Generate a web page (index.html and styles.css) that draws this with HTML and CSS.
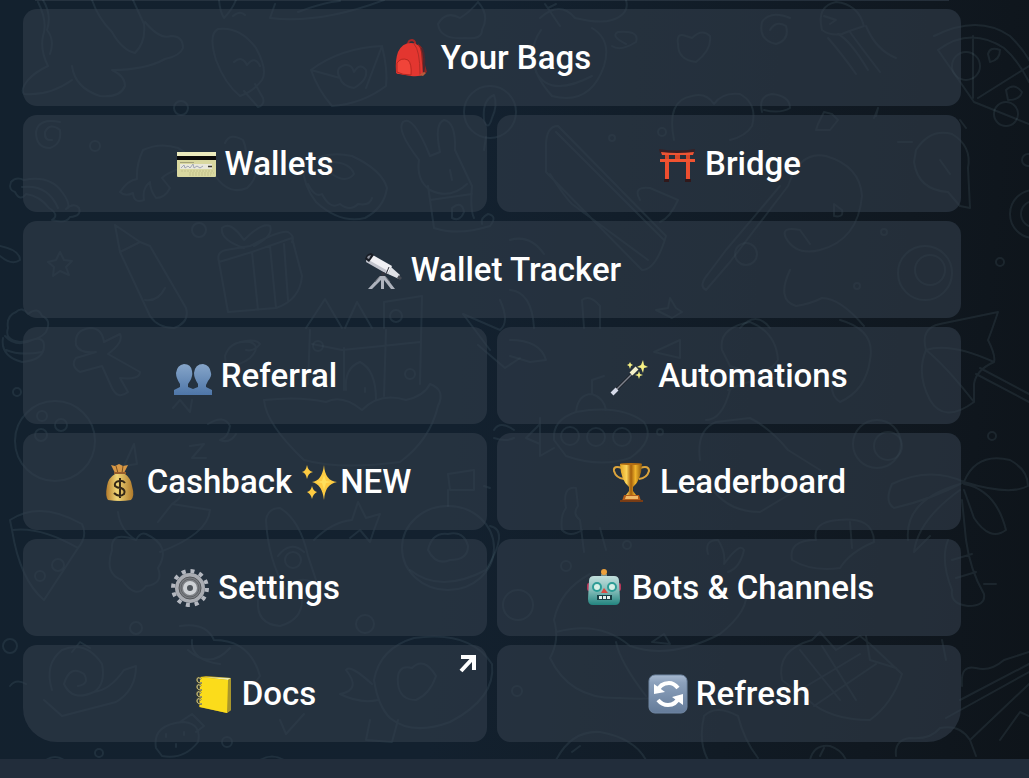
FILE: index.html
```html
<!DOCTYPE html>
<html lang="en">
<head>
    <meta charset="UTF-8">
    <meta name="viewport" content="width=device-width, initial-scale=1.0">
    <title>Bot Menu</title>
    <link rel="stylesheet" href="styles.css">
</head>
<body>
    <main class="chat">
        <!-- Wallpaper doodles, drawn behind the keyboard -->
        <svg class="doodles" viewBox="0 0 1029 778" preserveAspectRatio="xMidYMid slice" aria-hidden="true">
            <!-- socks and boots -->
            <path d="M43 0Q52 15 47 30Q55 40 50 54M38 2Q48 22 43 36Q40 50 48 66Q35 72 28 80Q20 90 24 94Q50 96 72 80M92 0Q98 18 112 32Q122 50 135 53Q146 42 144 24L133 0M145 22Q160 40 171 36Q183 36 183 48Q180 56 165 59Q145 70 112 70M112 70Q125 76 125 86Q120 98 100 96Q75 88 72 66"/>
            <!-- ice lolly -->
            <path d="M218 29Q240 26 256 48Q268 70 262 80Q253 92 240 96Q225 84 216 60Q208 34 218 29M234 62Q242 55 247 65Q255 55 260 66M244 91L258 107Q265 105 263 98L255 84"/>
            <!-- envelope -->
            <path d="M311 70Q340 48 382 46Q388 70 386 86Q362 104 332 106Q318 90 311 70L340 78M382 46L366 88M340 78Q334 68 345 65Q352 64 354 72Q360 62 366 70Q368 80 354 88Q342 86 340 78"/>
            <path d="M219 0Q220 12 224 18Q232 10 236 0M233 16Q240 10 245 15M275 4L270 18Q320 24 384 0M298 12Q325 2 340 1M478 2Q490 15 482 30Q482 40 465 38Q440 40 438 24Q446 10 460 18Q470 12 478 2"/>
            <!-- balloon -->
            <circle cx="490" cy="112" r="26"/>
            <path d="M494 95Q482 100 484 120Q488 132 492 118Q498 105 494 95M486 137L484 150"/>
            <circle cx="181" cy="108" r="7"/><circle cx="95" cy="146" r="5"/><circle cx="199" cy="230" r="7"/>
            <path d="M60 122Q38 118 36 132Q36 148 50 148Q62 144 60 130Q50 122 45 132Q44 141 52 140"/>
            <!-- small rainbow -->
            <path d="M15 192Q8 190 11 182Q16 176 24 180Q50 175 62 192Q70 202 68 208M15 192Q20 202 26 194Q40 196 49 208Q60 215 52 220Q66 224 70 217Q82 216 79 208Q74 202 66 209M22 187Q48 184 58 208"/>
            <!-- turtle -->
            <path d="M120 192Q128 180 137 179Q136 165 143 150Q160 142 178 148Q190 154 192 166Q170 170 162 178L170 188Q165 198 156 198Q150 190 150 182Q142 188 144 200Q134 204 133 193Q125 197 120 192M225 143Q230 132 243 140Q250 156 240 162M214 174Q228 196 247 188Q256 180 256 170"/>
            <!-- donut -->
            <path d="M303 166Q322 150 352 156Q382 170 387 188Q384 208 365 218Q340 224 316 202Q303 185 303 166M330 162Q350 162 354 174Q346 184 332 174Q326 168 330 162M308 184Q315 198 322 194Q330 210 340 204Q350 212 358 204Q370 206 372 198"/>
            <!-- rabbit in a pot -->
            <path d="M419 160Q396 130 403 122Q413 114 430 156L440 152Q434 124 444 120Q456 122 455 150L472 186Q470 210 474 218M419 160Q416 180 430 190Q450 200 467 184M428 186L434 228Q458 236 490 226Q498 216 488 214Q480 218 482 224M430 200L472 194M450 170L452 180M452 208Q462 200 464 212Q460 222 452 218Z"/>
            <!-- crayon -->
            <path d="M115 225L120 252L140 242L115 225M120 252L150 316Q158 328 174 328Q190 322 186 308L150 246L140 242M145 300Q158 302 165 288"/>
            <!-- gift -->
            <path d="M219 262L252 252L292 238L302 276Q300 300 276 308L228 312ZM219 262Q216 252 226 250L250 246Q280 230 288 232Q295 236 292 242M252 252L258 310M270 246L276 308M284 244L288 300M244 248Q220 240 222 228Q230 220 244 240Q262 222 270 226Q274 236 254 246"/>
            <path d="M60 252L64 260L72 261L66 267L69 275L60 271L53 276L54 267L48 262L56 260ZM0 246Q20 250 20 260Q12 266 0 256M8 328Q6 316 16 312Q22 306 28 314Q38 306 42 316Q52 320 46 332Q40 340 20 342Q4 340 8 328M3 338Q0 356 22 362Q44 360 44 346Q44 336 32 340Q16 348 5 336M6 350Q20 356 42 352"/>
            <!-- sand castle -->
            <path d="M306 328L325 299L342 328M345 328L357 302L372 328M384 328V302L422 296L420 384M310 330L308 384M344 348V390M386 330L384 396M312 344L342 350L382 346L420 342M346 390Q344 368 360 362Q376 370 376 400M264 400Q266 424 304 460Q340 470 400 462Q430 440 438 406Q446 390 430 384Q424 396 406 400Q380 392 362 410Q342 394 326 402Q300 396 264 400M365 388V392"/>
            <circle cx="318" cy="346" r="5"/><circle cx="396" cy="316" r="6"/><circle cx="410" cy="374" r="5"/>
            <path d="M463 314L500 330Q510 322 500 300M463 314L490 350M478 345L505 368L520 358"/>
            <!-- gingerbread man -->
            <path d="M76 345Q74 330 90 328Q102 328 104 342L120 334Q124 342 108 354L140 372Q140 380 120 378L128 392Q118 400 112 388L102 366L80 372Q70 366 76 358L96 352Q80 354 76 345"/>
            <path d="M225 356Q230 340 250 342Q262 346 250 358Q240 366 226 366ZM240 342Q256 338 260 344Q254 352 246 350M173 408L180 400L190 412L192 400"/>
            <!-- bowling ball -->
            <circle cx="55" cy="441" r="40"/><circle cx="41" cy="435" r="6"/><circle cx="61" cy="425" r="6"/><circle cx="42" cy="416" r="5"/><circle cx="17" cy="392" r="4"/>
            <path d="M208 424Q224 414 230 426Q228 438 220 440Q230 444 236 434M190 446L204 444L192 458L206 458M124 466L134 444L137 464Z"/>
            <!-- pizza slice -->
            <path d="M10 520Q40 500 82 524Q88 536 78 548Q40 526 12 530ZM12 530Q20 580 44 600L78 548"/>
            <circle cx="58" cy="565" r="6"/><circle cx="40" cy="576" r="5"/>
            <!-- flower and bird -->
            <path d="M136 540Q110 530 112 550Q104 574 122 580Q136 600 146 586Q164 584 158 568Q172 546 146 534Q140 532 136 540M118 512Q120 530 136 540M158 522L172 504L210 510Q208 534 160 552M172 504Q188 494 184 480"/>
            <!-- rocket -->
            <path d="M266 520Q268 508 280 508Q300 520 308 556L318 586Q300 572 286 590Q268 560 266 520M278 556Q290 540 304 552M314 540Q332 522 352 520L358 502L366 518L380 514L374 530L370 542L360 530L350 538"/>
            <circle cx="293" cy="560" r="8"/><path d="M258 600Q256 624 280 626Q302 620 302 600"/>
            <!-- robot and planet -->
            <path d="M448 474L474 470V490L450 490ZM448 490V506M484 486L490 488"/>
            <ellipse cx="448" cy="548" rx="46" ry="42"/><path d="M428 550Q432 532 448 534Q464 530 468 546Q468 560 450 560Q436 566 428 550M410 570Q440 594 486 570Q510 530 490 526"/>
            <circle cx="10" cy="646" r="7"/><circle cx="136" cy="628" r="6"/><circle cx="227" cy="742" r="5"/><circle cx="99" cy="753" r="4"/><circle cx="365" cy="624" r="9"/>
            <!-- snail -->
            <path d="M52 690Q44 664 62 650Q86 640 102 664Q106 684 94 692Q110 690 124 670L136 666Q136 690 116 702L62 716L44 700M94 692Q72 702 64 684Q70 664 84 674Q90 684 78 686M72 652L80 642L90 648M10 686Q16 678 26 684"/>
            <!-- shrimp -->
            <path d="M180 626Q206 622 214 640Q250 640 260 676L250 690M192 640Q190 660 220 664M188 650Q210 670 230 648"/>
            <!-- strawberry -->
            <path d="M156 748Q152 724 184 722Q202 724 198 742Q184 760 162 756ZM180 722L192 714L204 726L196 732M166 734V737M176 744V747M184 732V735"/>
            <!-- fish -->
            <path d="M374 680Q380 648 414 638Q470 630 492 664Q496 698 450 722Q412 736 390 718Q378 706 374 680M372 684Q350 664 346 670Q362 690 340 694Q360 704 378 700M398 684Q396 664 412 668Q424 656 436 676Q430 694 416 700Q400 700 398 684M370 720L366 740L392 742L398 720M280 720L286 734L304 714"/>
            <path d="M46 760Q55 754 64 760M260 760Q272 753 284 760M494 430Q500 420 514 430M494 438Q506 442 514 438"/>
            <!-- berry bowl -->
            <path d="M540 18Q560 0 575 18Q600 24 612 20Q630 14 626 0M541 30Q520 60 552 96Q590 106 604 66Q612 40 592 28M626 44Q610 36 618 32Q640 30 636 42Q620 52 612 46M536 72Q550 98 592 76M545 4L560 26M548 8L556 4"/>
            <path d="M678 44Q676 32 686 36L692 38Q702 28 710 36Q712 50 696 62Q678 60 678 44M790 18Q770 10 762 22Q758 40 776 44Q790 40 786 26Q776 20 770 30"/>
            <!-- jellyfish -->
            <path d="M822 30Q816 6 836 2Q858 4 864 26Q846 32 842 34Q830 36 822 30M828 38Q842 54 856 74M838 34Q850 40 868 70M850 32Q860 46 880 72M866 26Q876 50 896 58M824 16L836 20L830 24"/>
            <!-- pizza -->
            <path d="M934 36Q978 14 1010 36Q1028 54 1034 70M938 50Q970 26 1004 48Q1018 60 1029 82M938 50L974 102L1029 124M973 36V98M978 98L1029 66"/>
            <circle cx="966" cy="66" r="14"/><circle cx="1006" cy="114" r="12"/><path d="M988 54Q990 46 1000 50Q1000 60 990 62ZM1006 90Q1014 82 1022 92Q1020 100 1008 100Z"/>
            <!-- cookie clouds -->
            <path d="M674 140Q666 100 692 96Q706 92 714 104Q722 92 740 94Q758 104 752 126Q746 136 730 140M762 112Q758 96 772 94Q790 96 790 108Q780 114 764 110M818 124L824 112L832 114L838 120L830 130L816 130ZM874 118L878 108L876 116M898 142H912M960 120L966 128"/>
            <circle cx="662" cy="132" r="4"/><circle cx="612" cy="138" r="3"/>
            <!-- pencil box -->
            <path d="M546 146Q546 126 558 126L666 236Q656 270 642 270L546 172ZM556 132L664 240M550 174Q564 196 572 204L648 260M640 200Q632 186 650 188L678 200Q670 218 660 222"/>
            <!-- spoon -->
            <path d="M788 186Q800 150 826 156Q860 166 862 196Q858 240 820 250Q796 256 786 238Q780 226 800 230L810 244M788 186L730 262L706 290Q698 286 708 274L726 250L780 186M834 204V216Q844 218 842 210Z"/>
            <circle cx="746" cy="254" r="11"/><circle cx="884" cy="232" r="3"/><circle cx="857" cy="286" r="3"/><circle cx="1000" cy="262" r="4"/>
            <path d="M916 150Q930 128 952 134Q972 146 968 168L970 208L960 206L948 192Q918 190 914 162ZM940 160L950 174"/>
            <circle cx="925" cy="273" r="27"/><circle cx="930" cy="270" r="15"/><circle cx="1028" cy="160" r="6"/><circle cx="1034" cy="214" r="24"/><circle cx="1034" cy="214" r="13"/>
            <path d="M790 270Q776 300 796 306Q810 304 822 298Q840 298 864 326M656 310L668 308L670 298L676 308L682 312L672 318ZM584 328L582 300Q590 294 600 306V328M740 328Q756 310 770 328M510 290Q532 292 534 328M510 240Q530 234 544 254"/>
            <!-- umbrella -->
            <path d="M926 350Q920 328 940 324L998 312Q992 330 988 340Q996 356 994 362Q976 370 974 384L974 402Q944 424 930 400Q916 374 926 350M926 350Q950 342 994 362M926 350Q946 366 974 402M976 374L1029 402M980 368L1029 394"/>
            <circle cx="992" cy="436" r="4"/>
            <!-- submarine -->
            <path d="M554 440Q552 420 576 412Q620 404 644 422Q656 440 630 458Q600 468 566 456ZM576 412Q578 394 592 394Q604 398 606 410M592 394V380L604 376M540 418V456L554 448M540 424L526 438L540 444"/>
            <circle cx="570" cy="436" r="9"/><circle cx="596" cy="437" r="9"/><circle cx="622" cy="437" r="9"/><circle cx="660" cy="432" r="3"/>
            <path d="M510 340Q540 340 546 360L530 362L510 356M654 352L680 340V358ZM722 350Q718 328 750 322Q776 332 778 360Q766 380 730 366ZM730 390Q722 420 706 420M728 390Q760 374 790 380M840 320Q876 330 870 360Q866 390 840 402Q830 396 832 380"/>
            <circle cx="877" cy="444" r="24"/><circle cx="888" cy="446" r="14"/>
            <path d="M700 460Q696 430 716 422L750 418Q770 428 788 450L820 470M704 474Q720 512 760 512L790 494"/>
            <!-- palm tree -->
            <path d="M964 482Q976 452 1010 460Q1028 470 1028 486Q1010 496 964 482M964 482Q930 466 892 484Q884 502 894 508Q930 500 964 482M964 484Q996 490 1006 530Q990 542 974 518L964 490M960 484Q904 500 908 540M960 490Q918 520 914 552L930 536M962 500L966 540Q970 570 984 594Q986 606 968 606Q950 604 952 590Q940 560 948 540M952 560L972 554M956 578L976 572M984 584L996 584"/>
            <path d="M562 530Q560 516 566 508Q562 486 576 488L578 506Q572 514 580 520L584 552M562 530Q570 538 582 530M600 528L606 550M816 540Q812 522 838 520Q874 516 874 542Q850 552 840 568Q812 572 792 560Q788 540 816 540M850 522L852 548M708 554Q704 540 718 540Q726 552 724 564Q740 542 744 550Q740 568 728 572"/>
            <circle cx="566" cy="566" r="5"/><circle cx="627" cy="545" r="4"/><circle cx="518" cy="605" r="15"/><circle cx="517" cy="691" r="5"/>
            <!-- whale -->
            <path d="M554 620Q560 590 590 574M554 620Q560 640 550 658Q570 700 620 698Q650 700 680 696M556 632Q600 620 630 646Q670 660 720 634Q750 610 746 590M652 642L664 634L670 644ZM616 642Q620 662 646 696"/>
            <!-- pineapple -->
            <path d="M782 680Q776 650 812 640L820 632L836 650L860 636L870 644L902 674Q892 704 870 720Q830 720 808 700ZM800 650L840 700M822 646L856 700M800 690L860 654M814 706L876 664M866 636L870 660L896 668"/>
            <!-- mushrooms and guitar -->
            <path d="M556 760Q572 730 600 732Q634 738 646 760M572 752L580 746M704 716Q716 704 738 716Q744 740 758 758M704 716Q698 742 708 760M810 760Q814 744 830 746Q842 750 846 760M820 756L824 748"/>
            <path d="M896 756Q894 740 910 738Q930 740 940 728Q960 724 970 740L1029 684M962 686Q960 664 976 668Q990 672 1004 660L1029 652M960 700L1029 664M946 718L1029 672M1000 740L1020 712L1029 716M970 740L976 756M942 640L946 660"/>
        </svg>

        <div class="previous-row"></div>

        <div class="keyboard">
            <button class="key wide" type="button">
                <svg class="icon" viewBox="0 0 40 40" aria-hidden="true">
                    <path d="M15 7Q15 2 19 2Q23 3 22 7" fill="none" stroke="#a32826" stroke-width="2"/>
                    <path d="M25 6Q31 9 31 18Q31 26 34 34L27 38Z" fill="#8c2522"/>
                    <path d="M29 10Q33 20 30 36" fill="none" stroke="#4d2830" stroke-width="2"/>
                    <path d="M3 34Q2 22 5 14Q9 5 18 5Q27 5 28 14L30 36Q27 39 18 38L6 36Q3 36 3 34Z" fill="#e33630"/>
                    <path d="M21 6Q27 12 27 37" fill="none" stroke="#b22d27" stroke-width="1"/>
                    <path d="M4 25Q8 19 15 22Q19 26 18 37Q9 37 4 34Z" fill="#f04439" stroke="#b72720" stroke-width="1"/>
                    <path d="M26 37L31 34L33 35L30 38Z" fill="#b85a3a"/>
                </svg>
                <span>Your Bags</span>
            </button>

            <button class="key" type="button">
                <svg class="icon" viewBox="0 0 40 40" aria-hidden="true">
                    <rect x="0" y="8" width="39" height="25" rx="1" fill="#d9d8a0"/>
                    <path d="M0 8H39V12H0Z" fill="#ecebbd"/>
                    <path d="M0 12H39V16H0Z" fill="#0b0b0a"/>
                    <path d="M3 20H35V25H3Z" fill="#e9e8dc"/>
                    <path d="M3 18.500H17" stroke="#a5a37b" stroke-width="1"/>
                    <path d="M4 24L7 21L8 24L11 22L13 24L16 20L17 24L20 22L23 24L26 22" fill="none" stroke="#a0a5b5" stroke-width="1"/>
                    <path d="M31 22.500H35" stroke="#39382f" stroke-width="1.500"/>
                    <path d="M4 27H36M12 29H37M12 31H34" stroke="#c3c18c" stroke-width="1" stroke-dasharray="2 1"/>
                </svg>
                <span>Wallets</span>
            </button>

            <button class="key" type="button">
                <svg class="icon" viewBox="0 0 40 40" aria-hidden="true">
                    <path d="M2 5Q20 8 38 5L37 9H3Z" fill="#381f24"/>
                    <path d="M4 8Q20 10 37 8L36 11H5Z" fill="#ed5434"/>
                    <path d="M8 11H12V15H8ZM18 11H23V15H18ZM29 11H33V15H29Z" fill="#d64728"/>
                    <path d="M3 15H38V18H3Z" fill="#f15331"/>
                    <path d="M8 18H12V35H8ZM29 18H33V35H29Z" fill="#ee4e2f"/>
                    <path d="M7 35H12V38H7ZM28 35H34V38H28Z" fill="#30181b"/>
                </svg>
                <span>Bridge</span>
            </button>

            <button class="key wide" type="button">
                <svg class="icon" viewBox="0 0 40 40" aria-hidden="true">
                    <path d="M17 26L5 39H9L18 30V39H21V30L28 39H32L22 26Z" fill="#aeb3bd"/>
                    <path d="M17 26L12 32M22 26L27 32" stroke="#73767e" stroke-width="1"/>
                    <path d="M8 4L29 16L25 24L3 11Z" fill="#f0f0f4"/>
                    <path d="M4 9L25 21L24 24L3 12Z" fill="#c3c5ce"/>
                    <path d="M8 3L11 5L6 12L2 9Q3 4 8 3Z" fill="#181c24"/>
                    <path d="M5 6L8 5L6 9L4 8Z" fill="#8f929d"/>
                    <path d="M28 17L37 25L36 29L25 24Z" fill="#e0e2e7"/>
                    <path d="M26 17L23 24" stroke="#34363f" stroke-width="1"/>
                    <path d="M36 25L39 28L37 30L34 28Z" fill="#454952"/>
                    <circle cx="20" cy="24" r="2" fill="#343640"/>
                </svg>
                <span>Wallet Tracker</span>
            </button>

            <button class="key" type="button">
                <svg class="icon" viewBox="0 0 40 40" aria-hidden="true">
                    <defs>
                        <linearGradient id="people" x1="0" y1="0" x2="0" y2="1">
                            <stop offset="0" stop-color="#86a5c9"/>
                            <stop offset="1" stop-color="#4e76a8"/>
                        </linearGradient>
                    </defs>
                    <path d="M11 8Q18 8 19 15Q20 20 17 25L15 28V31L20 33L25 31V28Q21 22 21 17Q22 8 30 8Q37 9 38 17Q39 20 35 25L33 29V31L39 34V39H1V34L7 31V28Q3 22 3 17Q4 9 11 8Z" fill="url(#people)"/>
                </svg>
                <span>Referral</span>
            </button>

            <button class="key" type="button">
                <svg class="icon" viewBox="0 0 40 40" aria-hidden="true">
                    <path d="M4 36L26 14" stroke="#1d2128" stroke-width="3"/>
                    <path d="M5 35L24 16" stroke="#7e828c" stroke-width="1.500"/>
                    <path d="M2 38L7 33" stroke="#d6dbe9" stroke-width="4"/>
                    <path d="M21 18L27 12" stroke="#f4f0ca" stroke-width="4"/>
                    <path d="M33 4L34 9L38 11L34 12L33 17L31 12L27 11L31 9ZM20 6L21 8L23 9L21 10L20 13L19 10L17 9L19 8ZM29 15L30 18L33 19L30 20L29 23L28 20L25 19L28 18Z" fill="#f5ef83"/>
                </svg>
                <span>Automations</span>
            </button>

            <button class="key" type="button">
                <svg class="icon" viewBox="0 0 40 40" aria-hidden="true">
                    <defs>
                        <linearGradient id="sack" x1="0" y1="0" x2="1" y2="0">
                            <stop offset="0" stop-color="#b57c2c"/>
                            <stop offset="0.400" stop-color="#efd577"/>
                            <stop offset="1" stop-color="#b07a2b"/>
                        </linearGradient>
                    </defs>
                    <path d="M12 3L16 4L20 2L24 4L29 3L25 11H16Z" fill="#d79745"/>
                    <path d="M17 4L19 11M24 4L23 11" stroke="#795022" stroke-width="1"/>
                    <path d="M16 12H26Q32 16 33 24Q36 34 32 38Q21 40 9 38Q6 34 8 24Q9 16 16 12Z" fill="url(#sack)"/>
                    <path d="M15 11H27" stroke="#965d2d" stroke-width="2"/>
                    <path d="M26 21Q24 18 20 19Q15 20 16 24Q18 26 22 26Q27 28 25 32Q20 36 15 31M21 16V36" fill="none" stroke="#332717" stroke-width="2"/>
                </svg>
                <span>Cashback</span>
                <span class="new">
                    <svg class="icon" viewBox="0 0 40 40" aria-hidden="true">
                        <path d="M24 3Q25 19 37 20Q25 22 24 38Q22 22 12 20Q22 19 24 3ZM7 3Q8 9 13 10Q8 11 7 17Q6 11 2 10Q6 9 7 3ZM12 24Q13 29 17 30Q13 32 12 37Q11 32 7 30Q11 29 12 24Z" fill="#fdcb42"/>
                        <path d="M24 13L26 19L32 20L26 21L24 28L22 21L16 20L22 19Z" fill="#ffdf5c"/>
                    </svg>NEW
                </span>
            </button>

            <button class="key" type="button">
                <svg class="icon" viewBox="0 0 40 40" aria-hidden="true">
                    <defs>
                        <linearGradient id="gold" x1="0" y1="0" x2="1" y2="0">
                            <stop offset="0" stop-color="#e0a322"/>
                            <stop offset="0.300" stop-color="#fbd359"/>
                            <stop offset="0.500" stop-color="#a55f0b"/>
                            <stop offset="0.700" stop-color="#f0b42b"/>
                            <stop offset="1" stop-color="#8d580b"/>
                        </linearGradient>
                    </defs>
                    <path d="M10 6Q1 3 2 9Q4 16 12 17M28 6Q37 3 37 9Q35 16 27 17" fill="none" stroke="#dca43c" stroke-width="2"/>
                    <path d="M8 2H30Q29 19 21 25V29L24 33H14L17 29V25Q9 19 8 2Z" fill="url(#gold)"/>
                    <ellipse cx="19" cy="2" rx="11" ry="1" fill="#b46e12"/>
                    <path d="M12 33H27L29 39H10Z" fill="#b55c18"/>
                    <path d="M14 34H26V37H13Z" fill="#efb968"/>
                    <path d="M8 39H31" stroke="#783c15" stroke-width="2"/>
                </svg>
                <span>Leaderboard</span>
            </button>

            <button class="key" type="button">
                <svg class="icon" viewBox="0 0 40 40" aria-hidden="true">
                    <circle cx="20" cy="20" r="17" fill="none" stroke="#b4b8c0" stroke-width="4" stroke-dasharray="4 4.900"/>
                    <circle cx="20" cy="20" r="15" fill="#a9acb2"/>
                    <circle cx="20" cy="20" r="11" fill="#7c7f84" stroke="#55585c" stroke-width="1"/>
                    <circle cx="20" cy="20" r="9" fill="none" stroke="#5f6266" stroke-width="1"/>
                    <circle cx="20" cy="20" r="5" fill="#4d535a" stroke="#ced1d5" stroke-width="4"/>
                </svg>
                <span>Settings</span>
            </button>

            <button class="key" type="button">
                <svg class="icon" viewBox="0 0 40 40" aria-hidden="true">
                    <defs>
                        <linearGradient id="robot" x1="0" y1="0" x2="0" y2="1">
                            <stop offset="0" stop-color="#c2dfdd"/>
                            <stop offset="0.500" stop-color="#84bcb9"/>
                            <stop offset="1" stop-color="#22847f"/>
                        </linearGradient>
                    </defs>
                    <rect x="3" y="15" width="34" height="8" rx="2" fill="#b73558"/>
                    <path d="M17 6H23V10H17Z" fill="#78918e"/>
                    <circle cx="20" cy="4" r="3" fill="#eda13d"/>
                    <path d="M10 8H30Q35 8 35 13L36 31Q36 37 31 37H9Q4 37 4 31L5 13Q5 8 10 8Z" fill="url(#robot)"/>
                    <circle cx="13" cy="19" r="4" fill="#d7f0e7" stroke="#2d9c96" stroke-width="2"/>
                    <circle cx="28" cy="19" r="4" fill="#d7f0e7" stroke="#2d9c96" stroke-width="2"/>
                    <path d="M20 20L24 25H17Z" fill="#d84c42"/>
                    <path d="M13 27H28V32H13Z" fill="#193f45"/>
                    <path d="M15 28H18V31H15ZM19 28H22V31H19ZM23 28H26V31H23Z" fill="#e3f2ed"/>
                </svg>
                <span>Bots &amp; Channels</span>
            </button>

            <a class="key first-corner" href="#docs">
                <svg class="icon" viewBox="0 0 40 40" aria-hidden="true">
                    <path d="M6 3L12 2L37 4V36L33 39L5 33Z" fill="#bfa31d"/>
                    <path d="M9 3L37 4L34 6Z" fill="#eceab0"/>
                    <path d="M34 6L37 4V36L33 39Z" fill="#a8962c"/>
                    <path d="M6 3L34 6L33 39L6 33Z" fill="#fbdc1b"/>
                    <path d="M7 5Q3 2 3 6Q3 9 8 9M7 12Q3 9 3 13Q3 16 8 16M7 19Q3 16 3 20Q3 23 8 23M7 26Q3 23 3 27Q3 30 8 30" fill="none" stroke="#4a4829" stroke-width="2"/>
                    <path d="M7 5Q3 2 3 6Q3 9 8 9M7 12Q3 9 3 13Q3 16 8 16M7 19Q3 16 3 20Q3 23 8 23M7 26Q3 23 3 27Q3 30 8 30" fill="none" stroke="#d8d093" stroke-width="1"/>
                </svg>
                <span>Docs</span>
                <svg class="external" viewBox="0 0 18 18" aria-hidden="true">
                    <path d="M2 2H15V15M15 2L2 16" fill="none" stroke="#fff" stroke-width="4"/>
                </svg>
            </a>

            <button class="key last-corner" type="button">
                <svg class="icon" viewBox="0 0 40 40" aria-hidden="true">
                    <defs>
                        <linearGradient id="tile" x1="0" y1="0" x2="0" y2="1">
                            <stop offset="0" stop-color="#a7b9d0"/>
                            <stop offset="0.200" stop-color="#8ca1bc"/>
                            <stop offset="1" stop-color="#647b99"/>
                        </linearGradient>
                    </defs>
                    <rect x="1" y="1" width="38" height="38" rx="6" fill="url(#tile)" stroke="#7187a3" stroke-width="1"/>
                    <path d="M9 18Q12 9 21 9Q26 9 30 14M31 23Q28 31 20 31Q14 31 10 26" fill="none" stroke="#fff" stroke-width="4"/>
                    <path d="M6 10V20L17 18ZM35 20V31L24 23Z" fill="#fff"/>
                </svg>
                <span>Refresh</span>
            </button>
        </div>
    </main>
    <footer class="bottom-bar"></footer>
</body>
</html>
```
FILE: styles.css
```css
* {
    margin: 0;
    padding: 0;
    box-sizing: border-box;
}
body {
    display: flex;
    flex-direction: column;
    min-height: 100vh;
    font-family: Roboto, sans-serif;
    background: #222d3b;
}
.chat {
    position: relative;
    overflow: hidden;
    padding: 0 68px 17px 23px;
    background: linear-gradient(95deg, #13212e 0%, #13212f 45%, #101820 85%, #0e141a 100%);
}
/* Doodles cover the whole chat, behind everything else */
.doodles {
    position: absolute;
    top: 0;
    left: 0;
    width: 100%;
    height: auto;
    fill: none;
    stroke: #8fb9c4;
    stroke-opacity: 0.1;
    stroke-width: 2;
    stroke-linecap: round;
    stroke-linejoin: round;
}
/* Bottom edge of the row that is scrolled out of view */
.previous-row {
    height: 1px;
    margin: 0 12px 8px;
    background: rgba(50, 61, 75, 0.6);
}
.keyboard {
    position: relative;
    display: grid;
    grid-template-columns: 1fr 1fr;
    gap: 9px 10px;
}
.key {
    position: relative;
    display: flex;
    align-items: center;
    justify-content: center;
    gap: 8px;
    min-height: 97px;
    border: none;
    border-radius: 14px;
    background: rgba(50, 61, 75, 0.6);
    color: #fff;
    font-family: inherit;
    font-size: 33px;
    font-weight: 500;
    line-height: 40px;
    text-decoration: none;
    cursor: pointer;
}
.key:hover {
    background: rgba(60, 72, 88, 0.7);
}
.wide {
    grid-column: span 2;
}
.first-corner {
    border-bottom-left-radius: 34px;
}
.last-corner {
    border-bottom-right-radius: 34px;
}
.icon {
    width: 40px;
    height: 40px;
    flex-shrink: 0;
}
.new {
    display: flex;
    align-items: center;
}
.external {
    position: absolute;
    top: 10px;
    right: 10px;
    width: 18px;
    height: 18px;
}
.bottom-bar {
    flex: 1;
    min-height: 19px;
    background: #222d3b;
}
```
